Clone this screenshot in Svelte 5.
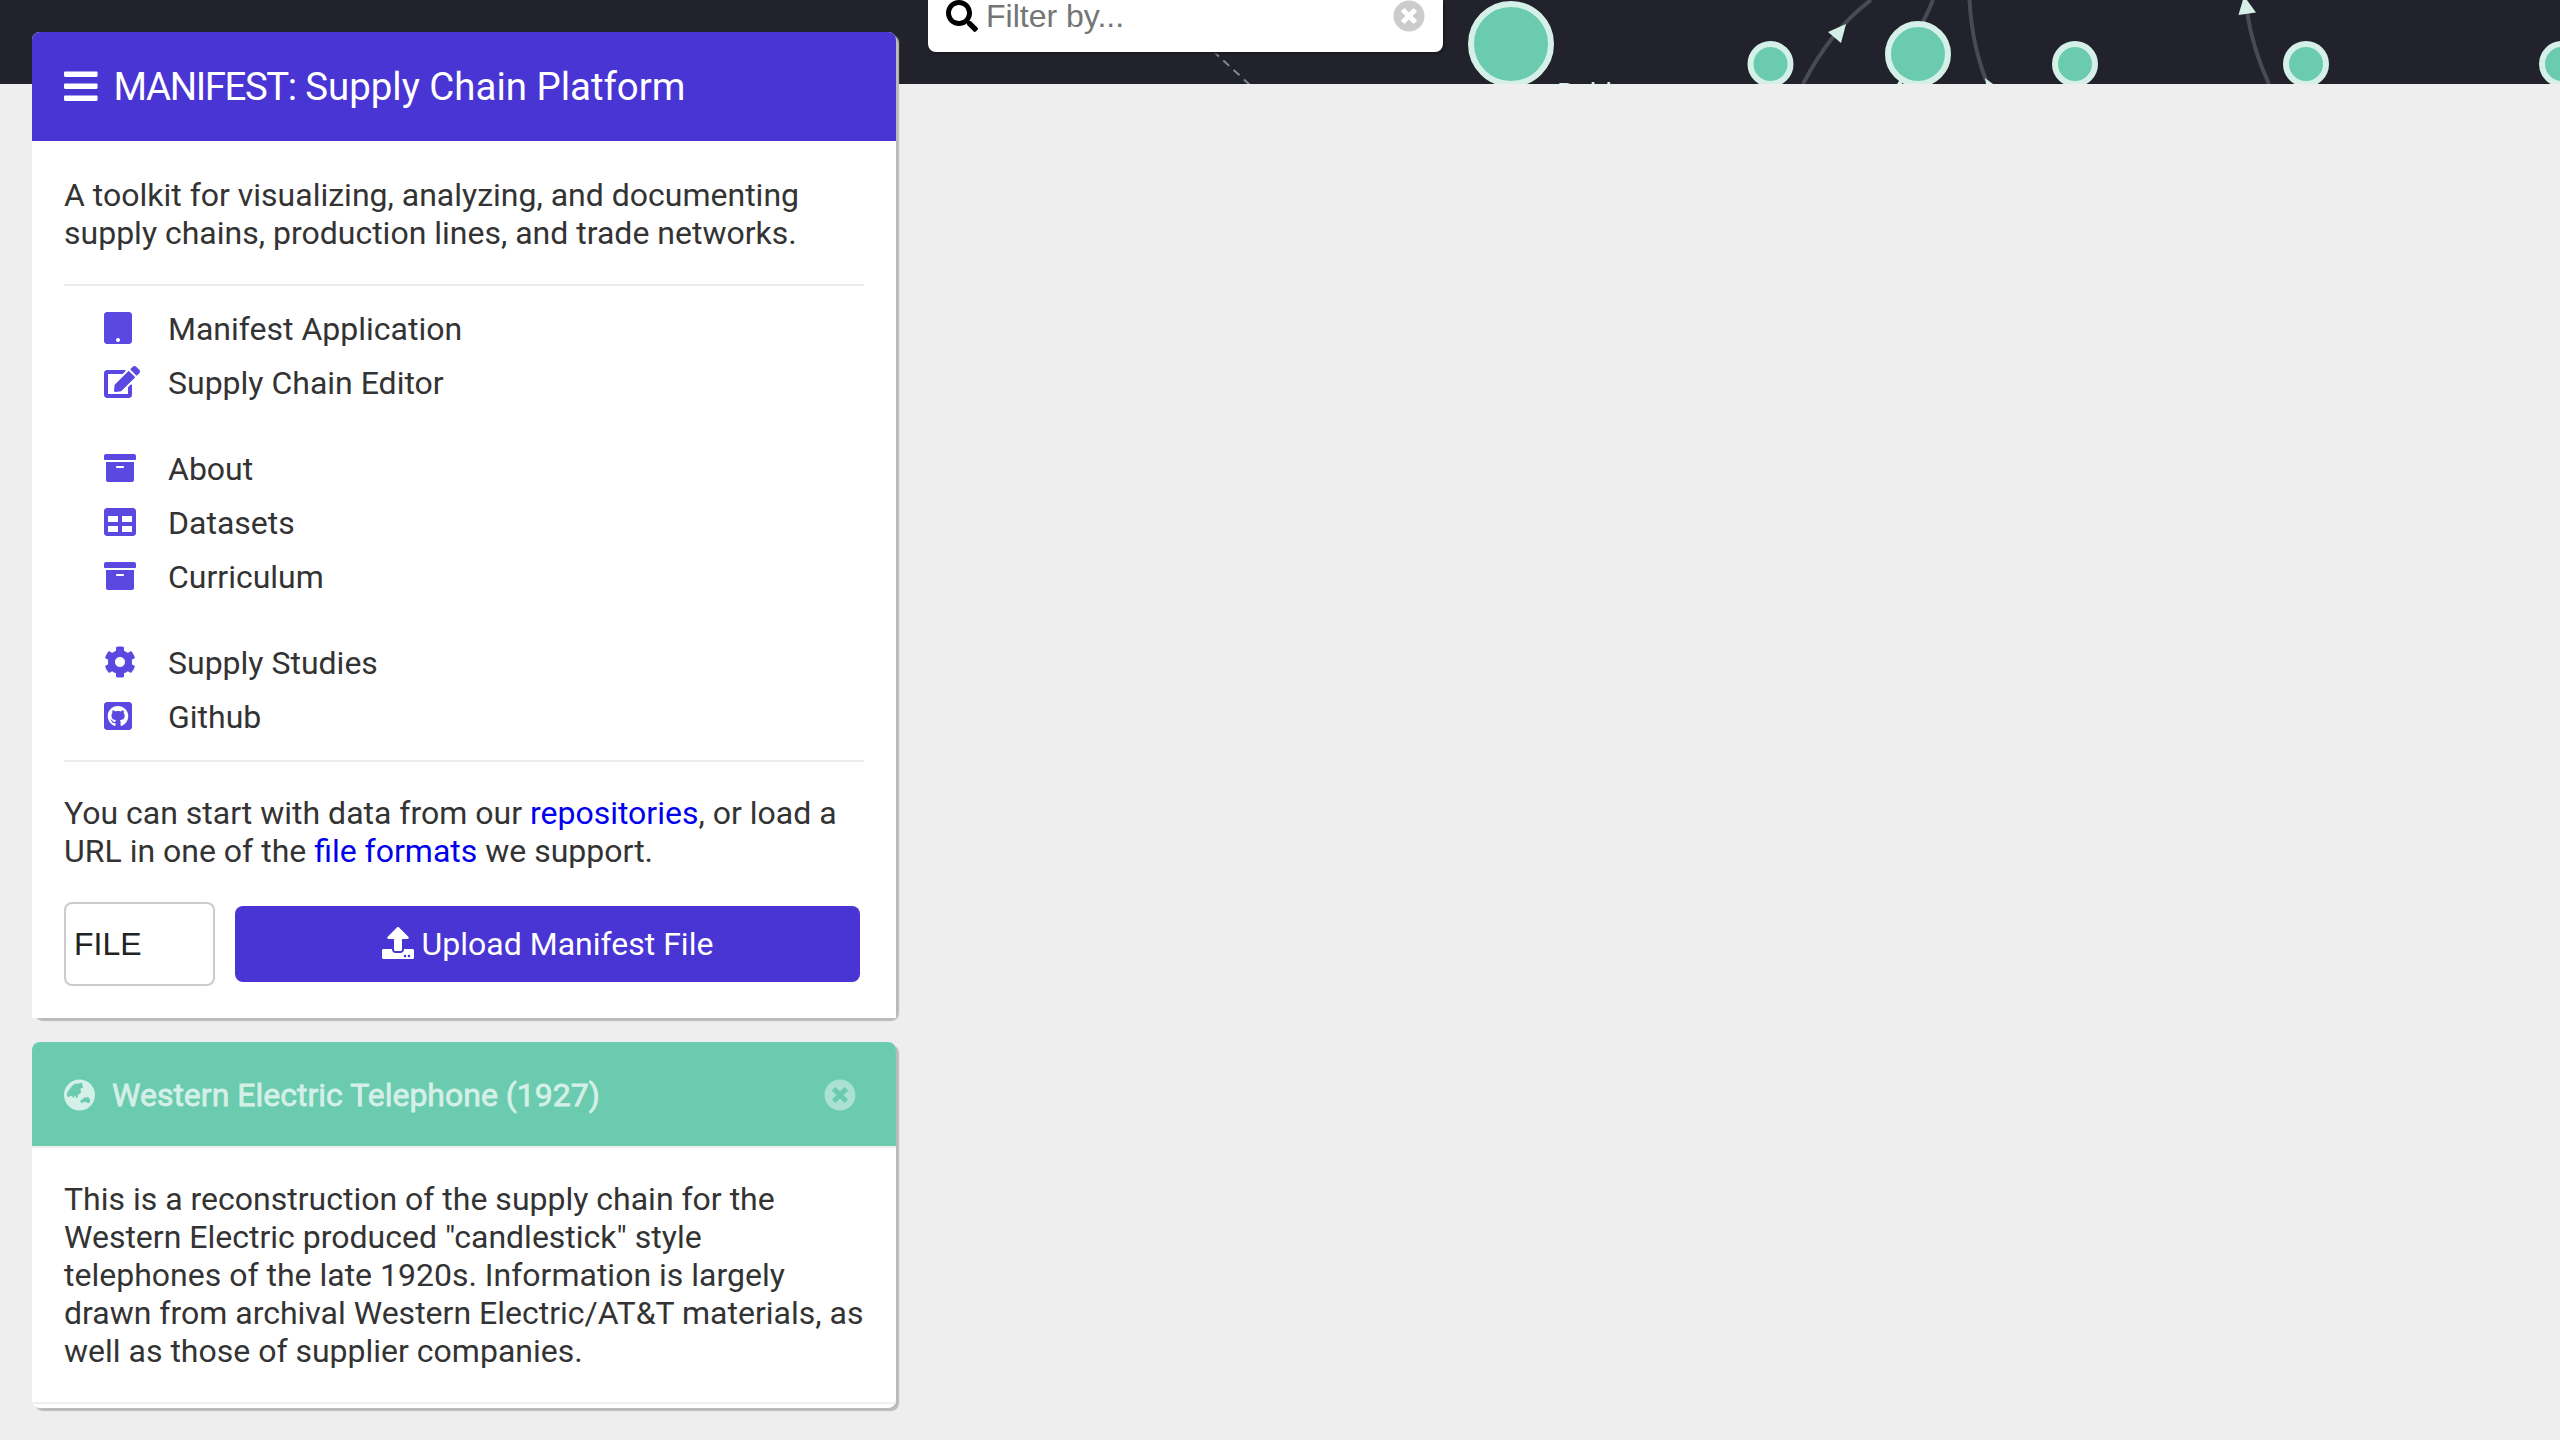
<script>
  const icons = {
    bars: [448, 'M16 132h416c8.8 0 16-7.2 16-16V76c0-8.8-7.2-16-16-16H16C7.200 60 0 67.200 0 76v40c0 8.800 7.200 16 16 16zm0 160h416c8.800 0 16-7.200 16-16v-40c0-8.800-7.200-16-16-16H16c-8.800 0-16 7.200-16 16v40c0 8.800 7.200 16 16 16zm0 160h416c8.800 0 16-7.200 16-16v-40c0-8.800-7.200-16-16-16H16c-8.800 0-16 7.200-16 16v40c0 8.800 7.200 16 16 16z'],
    tablet: [448, 'M400 0H48C21.500 0 0 21.500 0 48v416c0 26.500 21.500 48 48 48h352c26.500 0 48-21.500 48-48V48c0-26.500-21.500-48-48-48zM224 480c-17.700 0-32-14.300-32-32s14.300-32 32-32 32 14.300 32 32-14.300 32-32 32z'],
    edit: [576, 'M402.600 83.200l90.200 90.200c3.800 3.800 3.800 10 0 13.800L274.400 405.600l-92.800 10.300c-12.400 1.400-22.900-9.100-21.500-21.500l10.300-92.800L388.800 83.200c3.800-3.800 10-3.800 13.800 0zm162-22.900l-48.800-48.800c-15.200-15.200-39.900-15.200-55.200 0l-35.400 35.400c-3.800 3.800-3.800 10 0 13.800l90.200 90.200c3.800 3.800 10 3.800 13.800 0l35.400-35.400c15.200-15.300 15.200-40 0-55.200zM384 346.200V448H64V128h229.800c3.200 0 6.200-1.300 8.500-3.500l40-40c7.600-7.600 2.200-20.500-8.500-20.500H48C21.500 64 0 85.500 0 112v352c0 26.500 21.500 48 48 48h352c26.500 0 48-21.500 48-48V306.200c0-10.700-12.900-16-20.500-8.500l-40 40c-2.200 2.300-3.500 5.300-3.500 8.500z'],
    archive: [512, 'M32 448c0 17.700 14.300 32 32 32h384c17.700 0 32-14.300 32-32V160H32v288zm160-212c0-6.600 5.400-12 12-12h104c6.600 0 12 5.400 12 12v8c0 6.600-5.400 12-12 12H204c-6.600 0-12-5.400-12-12v-8zM480 32H32C14.300 32 0 46.300 0 64v48c0 8.800 7.200 16 16 16h480c8.800 0 16-7.200 16-16V64c0-17.700-14.300-32-32-32z'],
    table: [512, 'M464 32H48C21.500 32 0 53.500 0 80v352c0 26.500 21.500 48 48 48h416c26.500 0 48-21.500 48-48V80c0-26.500-21.500-48-48-48zM224 416H64v-96h160v96zm0-160H64v-96h160v96zm224 160H288v-96h160v96zm0-160H288v-96h160v96z'],
    cog: [512, 'M487.400 315.700l-42.600-24.600c4.300-23.200 4.300-47 0-70.200l42.600-24.600c4.900-2.800 7.100-8.600 5.500-14-11.100-35.600-30-67.800-54.700-94.600-3.800-4.100-10-5.100-14.800-2.300L380.800 110c-17.900-15.400-38.500-27.300-60.800-35.100V25.800c0-5.600-3.900-10.500-9.400-11.700-36.700-8.200-74.300-7.800-109.200 0-5.500 1.200-9.400 6.100-9.400 11.700V75c-22.200 7.900-42.800 19.800-60.800 35.100L88.700 85.500c-4.900-2.800-11-1.900-14.800 2.300-24.700 26.700-43.600 58.900-54.700 94.600-1.700 5.400.6 11.200 5.500 14L67.300 221c-4.300 23.200-4.300 47 0 70.200l-42.600 24.600c-4.900 2.800-7.100 8.600-5.500 14 11.100 35.600 30 67.800 54.700 94.600 3.800 4.100 10 5.100 14.800 2.300l42.600-24.600c17.900 15.400 38.500 27.300 60.800 35.100v49.200c0 5.600 3.900 10.500 9.400 11.700 36.700 8.200 74.300 7.800 109.200 0 5.500-1.200 9.400-6.100 9.400-11.700v-49.200c22.200-7.900 42.800-19.800 60.800-35.100l42.600 24.600c4.900 2.800 11 1.900 14.800-2.300 24.700-26.700 43.600-58.900 54.700-94.600 1.500-5.500-.7-11.300-5.600-14.100zM256 336c-44.100 0-80-35.900-80-80s35.900-80 80-80 80 35.900 80 80-35.900 80-80 80z'],
    github: [448, 'M400 32H48C21.500 32 0 53.500 0 80v352c0 26.500 21.500 48 48 48h352c26.500 0 48-21.500 48-48V80c0-26.500-21.500-48-48-48zM277.300 415.700c-8.400 1.500-11.500-3.700-11.500-8 0-5.400.2-33 .2-55.300 0-15.600-5.200-25.500-11.300-30.700 37-4.100 76-9.200 76-73.100 0-18.200-6.500-27.300-17.100-39 1.700-4.300 7.400-22-1.700-45-13.900-4.300-45.700 17.900-45.700 17.900-13.200-3.700-27.500-5.600-41.600-5.600-14.100 0-28.400 1.900-41.600 5.600 0 0-31.800-22.200-45.700-17.900-9.100 22.900-3.500 40.600-1.700 45-10.600 11.700-15.600 20.800-15.600 39 0 63.600 37.300 69 74.300 73.100-4.800 4.300-9.100 11.700-10.600 22.300-9.500 4.300-33.800 11.700-48.300-13.900-9.100-15.800-25.500-17.100-25.500-17.100-16.200-.2-1.100 10.200-1.100 10.200 10.800 5 18.400 24.200 18.400 24.200 9.700 29.700 56.100 19.700 56.100 19.700 0 13.900.2 36.500.2 40.600 0 4.300-3 9.500-11.500 8-66-22.100-112.200-84.900-112.200-158.300 0-91.800 70.200-161.500 162-161.500S388 165.600 388 257.400c.1 73.400-44.700 136.300-110.700 158.300z'],
    upload: [512, 'M296 384h-80c-13.300 0-24-10.700-24-24V192h-87.700c-17.800 0-26.700-21.500-14.100-34.100L242.300 5.700c7.500-7.500 19.800-7.500 27.300 0l152.200 152.200c12.600 12.600 3.700 34.100-14.100 34.100H320v168c0 13.300-10.700 24-24 24zm216-8v112c0 13.300-10.700 24-24 24H24c-13.300 0-24-10.700-24-24V376c0-13.300 10.700-24 24-24h136v8c0 30.900 25.100 56 56 56h80c30.900 0 56-25.100 56-56v-8h136c13.300 0 24 10.700 24 24zm-124 88c0-11-9-20-20-20s-20 9-20 20 9 20 20 20 20-9 20-20zm64 0c0-11-9-20-20-20s-20 9-20 20 9 20 20 20 20-9 20-20z'],
    search: [512, 'M505 442.700L405.300 343c-4.500-4.500-10.600-7-17-7H372c27.600-35.300 44-79.700 44-128C416 93.100 322.900 0 208 0S0 93.100 0 208s93.100 208 208 208c48.300 0 92.700-16.400 128-44v16.300c0 6.400 2.500 12.500 7 17l99.700 99.700c9.400 9.400 24.600 9.400 33.900 0l28.300-28.300c9.400-9.400 9.400-24.600.1-34zM208 336c-70.700 0-128-57.200-128-128 0-70.700 57.200-128 128-128 70.700 0 128 57.200 128 128 0 70.700-57.200 128-128 128z'],
    close: [512, 'M256 8C119 8 8 119 8 256s111 248 248 248 248-111 248-248S393 8 256 8zm121.600 313.100c4.700 4.700 4.700 12.300 0 17L338 377.600c-4.700 4.700-12.300 4.700-17 0L256 312l-65.100 65.600c-4.700 4.700-12.300 4.700-17 0L134.400 338c-4.700-4.700-4.700-12.300 0-17l65.600-65-65.600-65.100c-4.700-4.700-4.700-12.300 0-17l39.600-39.600c4.700-4.700 12.300-4.700 17 0l65 65.700 65.100-65.600c4.700-4.700 12.300-4.700 17 0l39.600 39.600c4.700 4.700 4.700 12.300 0 17L312 256l65.600 65.100z'],
    globe: [496, 'M248 8a248 248 0 1 0 0 496a248 248 0 1 0 0-496zM292 57L250 68Q215 80 190 72Q150 85 128 112Q100 150 78 178Q48 208 44 258Q46 284 70 286L104 270H128L146 300L160 294L166 270L186 264L192 302L214 300Q232 284 220 262L234 244Q262 236 272 210Q278 190 262 172L268 146L302 140V112L290 88ZM330 292L350 300L362 286L376 294L384 282L398 304L418 326V364L400 386L372 382L352 362L322 366L278 386L264 364L268 334L300 324L312 304Z']
  };

  const groups = [
    [['tablet', 'Manifest Application'], ['edit', 'Supply Chain Editor']],
    [['archive', 'About'], ['table', 'Datasets'], ['archive', 'Curriculum']],
    [['cog', 'Supply Studies'], ['github', 'Github']]
  ];

  const nodes = [
    [1511, 44, 40], [1770.500, 64, 20], [1918, 54, 30], [2075, 64, 20], [2306, 64, 20], [2562, 64, 20]
  ];
</script>

{#snippet icon(name)}
  <svg class="icon {name}" viewBox="0 0 {icons[name][0]} 512"><path d={icons[name][1]} fill-rule="evenodd" /></svg>
{/snippet}

<div class="page">
  <svg class="graph" viewBox="0 0 2560 84">
    <g class="edges">
      <path class="dashed" d="M1213 51L1250 85" />
      <path d="M1803 84Q1831 30 1871 0" />
      <path d="M1933 0Q1929 10 1923 22" />
      <path d="M1969.500 0Q1972 45 1986 80" />
      <path d="M2247 12Q2253 50 2269 84" />
    </g>
    <g class="arrows">
      <path d="M1846 24L1828 32L1841 43Z" />
      <path d="M2244 -4L2238.500 15L2256 12.500Z" />
      <path d="M1985 78L1993 84H1986Z" />
      <path d="M1897 84L1902 77V84Z" />
    </g>
    {#each nodes as [x, y, r]}
      <circle cx={x} cy={y} r={r} />
    {/each}
    <text x="1557" y="103">Rubber</text>
  </svg>

  <aside class="sidebar">
    <section class="card">
      <header class="brand">{@render icon('bars')}<h1><span>MANIFEST:</span> Supply Chain Platform</h1></header>
      <div class="body">
        <p>A toolkit for visualizing, analyzing, and documenting supply chains, production lines, and trade networks.</p>
        <nav>
          {#each groups as group}
            <ul>
              {#each group as [name, label]}
                <li><span class="slot">{@render icon(name)}</span>{label}</li>
              {/each}
            </ul>
          {/each}
        </nav>
        <p>You can start with data from our <a href="#repositories">repositories</a>, or load a URL in one of the <a href="#formats">file formats</a> we support.</p>
        <div class="load">
          <div class="select">FILE</div>
          <button>{@render icon('upload')}Upload Manifest File</button>
        </div>
      </div>
    </section>

    <section class="card dataset">
      <header>{@render icon('globe')}<h2>Western Electric Telephone (1927)</h2>{@render icon('close')}</header>
      <div class="description">
        <p>This is a reconstruction of the supply chain for the Western Electric produced "candlestick" style telephones of the late 1920s. Information is largely drawn from archival Western Electric/AT&amp;T materials, as well as those of supplier companies.</p>
      </div>
    </section>
  </aside>

  <div class="filter">{@render icon('search')}<span>Filter by...</span>{@render icon('close')}</div>
</div>

<style>
  :global(body) { margin: 0; background: #eee; }
  .page {
    position: relative;
    display: flex;
    align-items: flex-start;
    gap: 32px;
    box-sizing: border-box;
    width: 2560px;
    height: 1440px;
    padding-left: 32px;
    overflow: hidden;
    background: #eee;
    color: #333;
    font: 32px/38px Roboto, sans-serif;
  }
  h1, h2, p, ul { margin: 0; padding: 0; font-weight: 400; }
  .icon { display: block; height: 32px; fill: currentColor; flex: none; }

  .graph { position: absolute; left: 0; top: 0; width: 2560px; height: 84px; background: #22222c; }
  .edges path { fill: none; stroke: #474c54; stroke-width: 4; }
  .edges .dashed { stroke: #7d8c91; stroke-width: 2; stroke-dasharray: 8 6; }
  .arrows path { fill: #d4f0e7; }
  circle { fill: #6bcbae; stroke: #d4f0e7; stroke-width: 6; }
  .graph text { fill: #d4f0e7; font-size: 28px; }

  .sidebar { position: relative; width: 864px; margin-top: 32px; }
  .card { border-radius: 8px; background: #fff; box-shadow: 3px 3px 1px #bbb; }
  .card + .card { margin-top: 24px; }
  header { display: flex; align-items: center; border-radius: 8px 8px 0 0; }
  .brand { height: 109px; padding-left: 32px; background: #4934d4; color: #fff; }
  .bars { height: 38.400px; }
  h1 { margin-left: 16px; font-size: 38.400px; line-height: 46px; }
  h1 span { letter-spacing: -1.400px; }

  .body { padding: 35px 32px 32px; background: #fff; }
  nav { margin: 32px 0; padding: 16px 0 0; border: solid #ececec; border-width: 2px 0; height: 458px; }
  ul { padding-bottom: 32px; list-style: none; }
  li { display: flex; align-items: center; height: 54px; padding-left: 40px; }
  .slot { width: 64px; margin-bottom: 2px; color: #5b48e0; }
  a { color: #00e; text-decoration: none; }
  .load { display: flex; align-items: center; gap: 20px; margin-top: 32px; }
  .select {
    display: flex;
    align-items: center;
    box-sizing: border-box;
    width: 151px;
    height: 84px;
    padding-left: 8px;
    border: 2px solid #ccc;
    border-radius: 8px;
    color: #222;
    font-family: "Liberation Sans", sans-serif;
  }
  button {
    display: flex;
    align-items: center;
    justify-content: center;
    gap: 8px;
    width: 625px;
    height: 76px;
    border: 0;
    border-radius: 8px;
    background: #4934d4;
    color: #fff;
    font: inherit;
  }
  .upload { margin-bottom: 2px; }

  .dataset { padding-bottom: 4px; }
  .dataset header { box-sizing: border-box; height: 106px; padding: 2px 40px 0 32px; border-bottom: 2px solid #eee; background: #6bcbae; color: #d4f0e7; }
  h2 { flex: 1; margin-left: 17px; font-size: 32px; -webkit-text-stroke: 0.800px; }
  .dataset .close { opacity: 0.600; }
  .description { padding: 32px; border-bottom: 2px solid #eee; }

  .filter {
    position: relative;
    display: flex;
    align-items: flex-start;
    box-sizing: border-box;
    width: 515px;
    height: 52px;
    padding: 0 18px;
    border-radius: 0 0 8px 8px;
    background: #fff;
    box-shadow: 2px 2px 2px #1a1a22;
    color: #000;
  }
  .filter span { flex: 1; margin: -3px 0 0 8px; color: #757575; font-family: "Liberation Sans", sans-serif; }
  .filter .close { color: #ccc; }
</style>
